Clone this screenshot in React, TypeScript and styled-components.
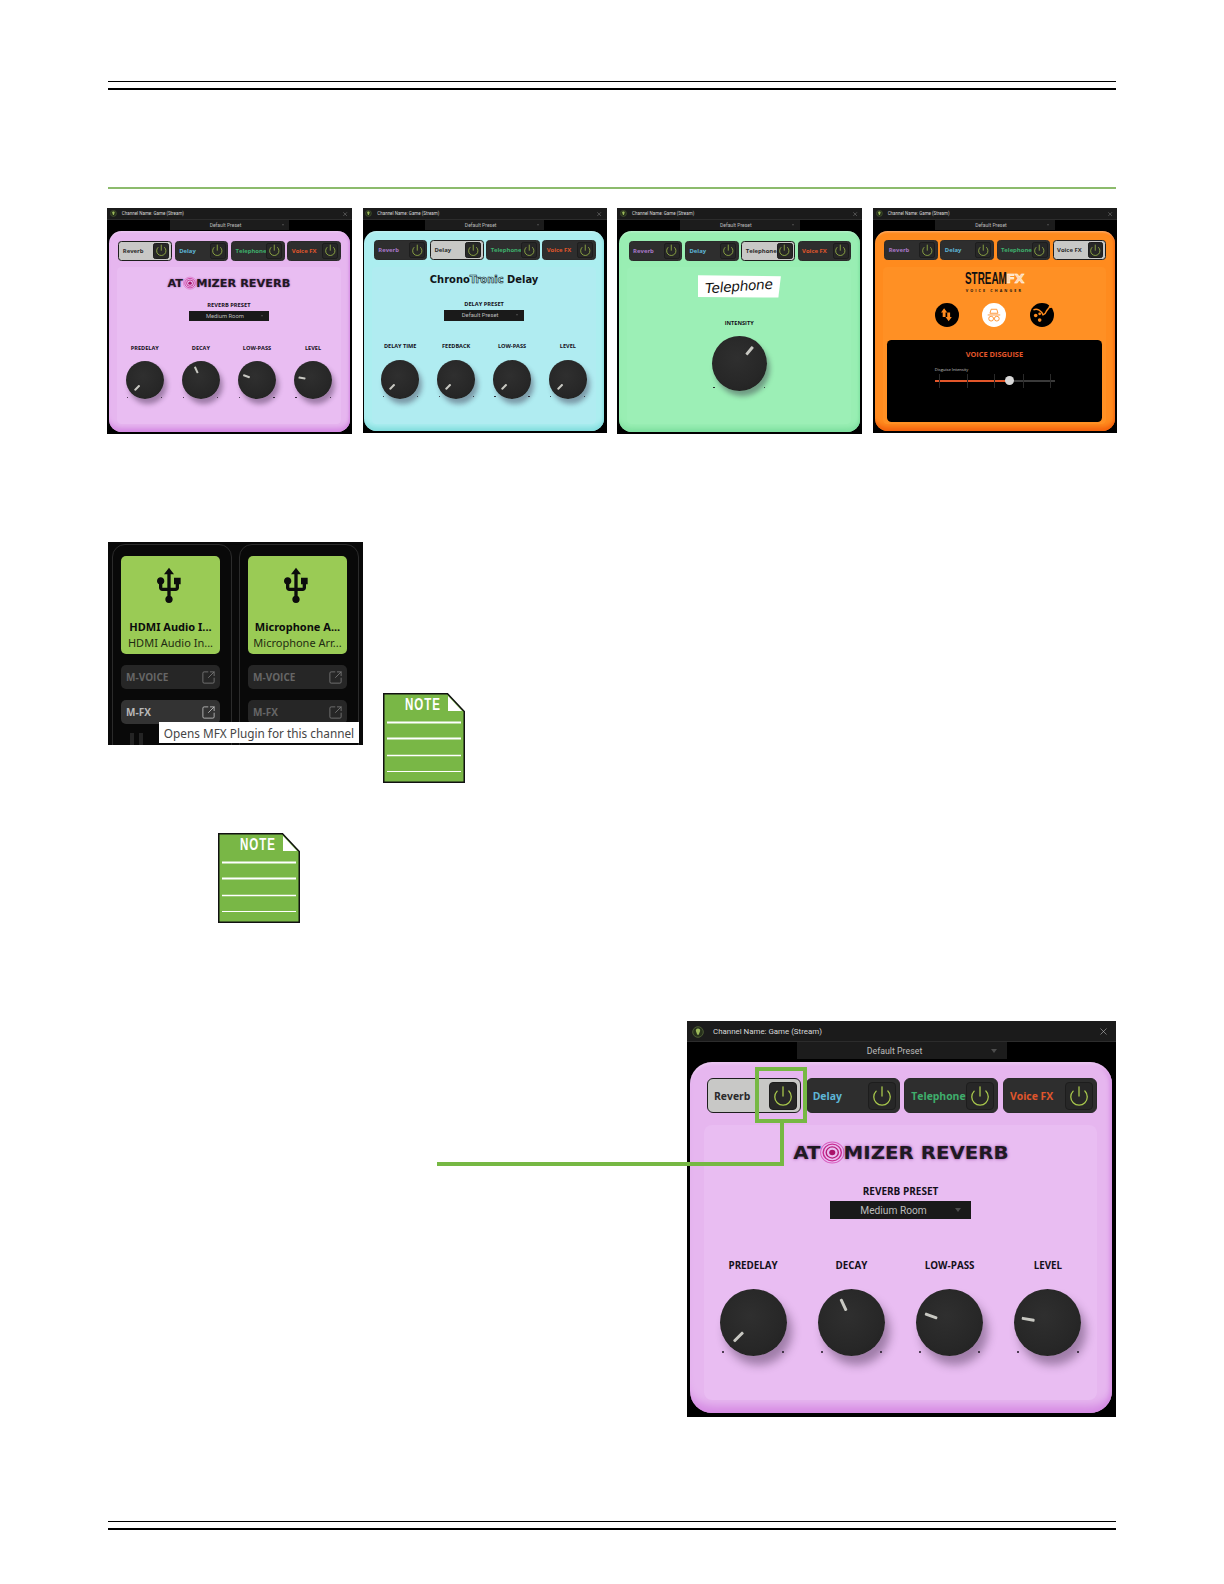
import React from "react";
import styled, { createGlobalStyle } from "styled-components";
import { Power, X, SquareArrowOutUpRight } from "lucide-react";
import { MdUsb } from "react-icons/md";

const Global = createGlobalStyle`
  html, body { margin: 0; padding: 0; background: #fff; }
  body { font-family: "Open Sans", "Liberation Sans", sans-serif; }
`;

const Page = styled.div`
  width: 1224px;
  height: 1584px;
  box-sizing: border-box;
  padding: 81px 108px 0;
  display: flex;
  flex-direction: column;
  overflow: hidden;
`;
const ThinRule = styled.div<{ $top?: number }>`
  height: 1px;
  background: #000;
  margin-top: ${p => p.$top ?? 0}px;
`;
const ThickRule = styled.div`
  height: 2px;
  background: #000;
  margin-top: 6px;
`;
const GreenRule = styled.div`
  height: 2px;
  background: #8cbb6c;
  margin-top: 97px;
`;
const PanelRow = styled.div`
  display: flex;
  justify-content: space-between;
  align-items: flex-start;
  margin: 19px -1px 0;
  width: 1010px;
  height: 226px;
`;

const Frame = styled.div<{ $scale: number }>`
  zoom: ${p => p.$scale};
  width: 429px;
  height: 396px;
  background: #000;
  display: flex;
  flex-direction: column;
  flex: none;
`;
const TitleBar = styled.div`
  height: 21px;
  box-sizing: border-box;
  background: #1b1b1b;
  display: flex;
  align-items: center;
  padding: 1px 7px 0 5px;
  gap: 9px;
  color: #d8d8d8;
  font-size: 7.9px;
  font-family: "Roboto", sans-serif;
  border-bottom: 1px solid #2c2c2c;
`;
const TitleText = styled.span`
  flex: 1;
`;
const PresetBar = styled.div`
  height: 17px;
  display: flex;
  justify-content: center;
`;
const PresetTop = styled.div`
  width: 210px;
  background: #1c1c1c;
  color: #bdbdbd;
  font-size: 8.8px;
  font-family: "Roboto", sans-serif;
  display: flex;
  align-items: center;
  justify-content: center;
  padding-right: 14px;
  box-sizing: border-box;
  position: relative;
`;
const PresetChevron = styled.span`
  position: absolute;
  right: 10px;
  top: 50%;
  transform: translateY(-50%);
  width: 0;
  height: 0;
  border-left: 3.5px solid transparent;
  border-right: 3.5px solid transparent;
  border-top: 4px solid #4d4d4d;
`;
const Body = styled.div<{ $bg: string; $edge: string }>`
  margin: 3px 4px 4px 3px;
  flex: 1;
  border-radius: 22px;
  background: ${p => p.$bg};
  box-shadow: inset 0 -13px 10px -6px ${p => p.$edge}, inset 0 3px 3px -1px rgba(255, 255, 255, 0.35), inset -3px 0 4px -1px ${p => p.$edge};
  padding: 16px 15px 13px 14px;
  display: flex;
  flex-direction: column;
  gap: 12px;
  box-sizing: border-box;
`;
const Tabs = styled.div`
  display: grid;
  grid-template-columns: repeat(4, 94px);
  gap: 4.67px;
  margin-left: 3px;
`;
const Tab = styled.div<{ $active: boolean }>`
  height: 35px;
  box-sizing: border-box;
  border-radius: 6px;
  background: ${p => (p.$active ? "#c8c8c6" : "#2e2e2e")};
  border: ${p => (p.$active ? "1.5px solid #1d1d1d" : "1px solid #2a2a2a")};
  display: flex;
  align-items: center;
  justify-content: space-between;
  padding: 0 3px 0 6px;
`;
const TabLabel = styled.span<{ $color: string }>`
  color: ${p => p.$color};
  font-weight: 700;
  font-size: 10.4px;
  white-space: nowrap;
`;
const PowerBox = styled.span`
  width: 28px;
  height: 28px;
  flex: none;
  border-radius: 4px;
  background: #272727;
  border: 1px solid #1d1d1d;
  box-sizing: border-box;
  display: flex;
  align-items: center;
  justify-content: center;
  color: #a8c84c;
`;
const Inner = styled.div<{ $bg: string }>`
  flex: 1;
  border-radius: 8px;
  background: ${p => p.$bg};
  display: flex;
  flex-direction: column;
  align-items: center;
  min-height: 0;
`;
const LogoSlot = styled.div`
  height: 55px;
  display: flex;
  align-items: center;
  justify-content: center;
`;
const AtomizerLogo = styled.div`
  font-family: "DejaVu Sans", sans-serif;
  font-weight: 700;
  font-size: 18px;
  color: #1f1a22;
  display: flex;
  align-items: center;
  white-space: nowrap;
  text-shadow: 0 0 3px #8a3f9c;
  transform: scaleX(1.1);
`;
const ChronoLogo = styled.div`
  font-family: "DejaVu Sans", sans-serif;
  font-weight: 700;
  font-size: 17.5px;
  color: #10151a;
  white-space: nowrap;
  margin-top: -10px;
`;
const Outlined = styled.span`
  color: transparent;
  -webkit-text-stroke: 1px #10151a;
`;
const PresetLabel = styled.div`
  font-family: "Open Sans", sans-serif;
  font-weight: 700;
  font-size: 10px;
  color: #14101a;
  line-height: 14px;
  margin-top: 4px;
`;
const PresetSelect = styled.div`
  width: 141px;
  height: 18px;
  margin-top: 3px;
  background: #1a1a1a;
  color: #bcbcbc;
  font-size: 10.2px;
  font-family: "Roboto", sans-serif;
  display: flex;
  align-items: center;
  justify-content: center;
  padding-right: 14px;
  box-sizing: border-box;
  position: relative;
`;
const KnobGrid = styled.div`
  width: 100%;
  display: grid;
  grid-template-columns: repeat(4, 1fr);
  margin-top: 40px;
`;
const KnobCol = styled.div`
  display: flex;
  flex-direction: column;
  align-items: center;
`;
const KnobLabel = styled.div`
  font-weight: 700;
  font-size: 9.8px;
  line-height: 14px;
  color: #14101a;
  margin-bottom: 16px;
  white-space: nowrap;
`;
const KnobDial = styled.div<{ $size: number }>`
  width: ${p => p.$size}px;
  height: ${p => p.$size}px;
  border-radius: 50%;
  background: radial-gradient(circle at 45% 40%, #2f2f2f 0%, #272727 60%, #1f1f1f 100%);
  box-shadow: 5px 9px 10px rgba(40, 20, 50, 0.38);
  position: relative;
`;
const KnobPointer = styled.span<{ $angle: number; $size: number }>`
  position: absolute;
  left: 50%;
  top: 50%;
  width: ${p => p.$size * 0.052}px;
  height: ${p => p.$size * 0.19}px;
  margin-left: ${p => p.$size * -0.026}px;
  border-radius: 1px;
  background: #c8c8c2;
  transform-origin: 50% 0;
  transform: rotate(${p => p.$angle + 180}deg) translateY(${p => p.$size * 0.2}px);
`;
const KnobDot = styled.span<{ $side: "left" | "right"; $size: number }>`
  position: absolute;
  top: ${p => p.$size * 0.93}px;
  ${p => p.$side}: ${p => p.$size * 0.01}px;
  width: 2px;
  height: 2px;
  border-radius: 50%;
  background: #1c1420;
  ${p => (p.$side === "left" ? "margin-left: 2px;" : "margin-right: 2px;")}
`;

function Knob({ angle, size = 67 }: { angle: number; size?: number }) {
  return (
    <KnobDial $size={size}>
      <KnobPointer $angle={angle} $size={size} />
      <KnobDot $side="left" $size={size} />
      <KnobDot $side="right" $size={size} />
    </KnobDial>
  );
}

const TAB_DEFS = [
  { name: "Reverb", color: "#a878c8" },
  { name: "Delay", color: "#5eb6d6" },
  { name: "Telephone", color: "#3fae6c" },
  { name: "Voice FX", color: "#e0562c" },
];

function HeaderLogo() {
  return (
    <svg width="12" height="12" viewBox="0 0 12 12">
      <circle cx="6" cy="6" r="5.3" fill="#26301c" stroke="#4d5c34" strokeWidth="1" />
      <path d="M6 2.5c1.6 0 2.4 1.2 2.1 2.4L6.7 8.8H5.3L3.9 4.9C3.6 3.7 4.4 2.5 6 2.5z" fill="#9cb95a" />
    </svg>
  );
}

function Shell({ scale, active, bg, inner, edge, children }: { scale: number; active: string; bg: string; inner: string; edge: string; children: React.ReactNode }) {
  return (
    <Frame $scale={scale}>
      <TitleBar>
        <HeaderLogo />
        <TitleText>Channel Name: Game (Stream)</TitleText>
        <X size={11} strokeWidth={1.2} color="#c4c4c4" />
      </TitleBar>
      <PresetBar>
        <PresetTop>
          Default Preset
          <PresetChevron />
        </PresetTop>
      </PresetBar>
      <Body $bg={bg} $edge={edge}>
        <Tabs>
          {TAB_DEFS.map(t => (
            <Tab key={t.name} $active={t.name === active}>
              <TabLabel $color={t.name === active ? "#2a2a2a" : t.color}>{t.name}</TabLabel>
              <PowerBox>
                <Power size={22} strokeWidth={1.4} />
              </PowerBox>
            </Tab>
          ))}
        </Tabs>
        <Inner $bg={inner}>{children}</Inner>
      </Body>
    </Frame>
  );
}

function KnobSet({ items }: { items: [string, number][] }) {
  return (
    <KnobGrid>
      {items.map(([label, angle]) => (
        <KnobCol key={label}>
          <KnobLabel>{label}</KnobLabel>
          <Knob angle={angle} />
        </KnobCol>
      ))}
    </KnobGrid>
  );
}

function Target() {
  return (
    <svg width="23" height="25" viewBox="0 0 25 25" style={{ margin: "0 -1px" }}>
      <circle cx="12.5" cy="12.5" r="11.5" fill="none" stroke="#d860c0" strokeWidth="1" />
      <circle cx="12.5" cy="12.5" r="9" fill="none" stroke="#c82a90" strokeWidth="1.4" />
      <circle cx="12.5" cy="12.5" r="6" fill="none" stroke="#b81c78" strokeWidth="1.4" />
      <circle cx="12.5" cy="12.5" r="3" fill="#a8126a" />
    </svg>
  );
}

function ReverbPanel({ scale }: { scale: number }) {
  return (
    <Shell scale={scale} active="Reverb" bg="#e6b6ef" inner="#e9bdf2" edge="#d58be3">
      <LogoSlot>
        <AtomizerLogo>
          AT<Target />MIZER REVERB
        </AtomizerLogo>
      </LogoSlot>
      <PresetLabel>REVERB PRESET</PresetLabel>
      <PresetSelect>
        Medium Room
        <PresetChevron />
      </PresetSelect>
      <KnobSet items={[["PREDELAY", -135], ["DECAY", -25], ["LOW-PASS", -70], ["LEVEL", -80]]} />
    </Shell>
  );
}

function DelayPanel({ scale }: { scale: number }) {
  return (
    <Shell scale={scale} active="Delay" bg="#aceef0" inner="#b0ecf1" edge="#84dede">
      <LogoSlot>
        <ChronoLogo>
          Chrono<Outlined>Tronic</Outlined> Delay
        </ChronoLogo>
      </LogoSlot>
      <PresetLabel>DELAY PRESET</PresetLabel>
      <PresetSelect>
        Default Preset
        <PresetChevron />
      </PresetSelect>
      <KnobSet items={[["DELAY TIME", -135], ["FEEDBACK", -135], ["LOW-PASS", -135], ["LEVEL", -135]]} />
    </Shell>
  );
}

const TelePatch = styled.div`
  margin-top: 14px;
  width: 146px;
  height: 39px;
  background: #fff;
  clip-path: polygon(0 0, 100% 4%, 97% 100%, 0 97%);
  display: flex;
  align-items: center;
  justify-content: center;
`;
const TeleText = styled.span`
  font-family: "DejaVu Sans", sans-serif;
  font-style: oblique;
  font-size: 24px;
  color: #111;
  letter-spacing: -0.5px;
  transform: rotate(-4deg);
`;
const TeleLabel = styled(KnobLabel)`
  margin-top: 37px;
  margin-bottom: 16px;
`;

function TelephonePanel({ scale }: { scale: number }) {
  return (
    <Shell scale={scale} active="Telephone" bg="#99eeb3" inner="#9cefb6" edge="#7fe0a0">
      <TelePatch>
        <TeleText>Telephone</TeleText>
      </TelePatch>
      <TeleLabel>INTENSITY</TeleLabel>
      <Knob angle={40} size={96} />
    </Shell>
  );
}

const FxLogo = styled.div`
  margin-top: 7px;
  display: flex;
  flex-direction: column;
  align-items: center;
`;
const FxTitle = styled.div`
  display: flex;
  align-items: center;
  height: 28px;
`;
const StreamWord = styled.span`
  width: 73px;
  font-family: "Liberation Sans", sans-serif;
  font-weight: 700;
  font-size: 29px;
  line-height: 28px;
  color: #111;
  white-space: nowrap;
  transform-origin: 0 50%;
  transform: scaleX(0.6);
`;
const FxOutlined = styled.span`
  color: #ffd8ae;
  -webkit-text-stroke: 0.7px #fff;
  font-family: "DejaVu Sans", sans-serif;
  font-weight: 700;
  font-size: 23px;
  line-height: 28px;
  letter-spacing: -1px;
`;
const FxSub = styled.div`
  font-size: 6.5px;
  font-weight: 700;
  letter-spacing: 3.7px;
  line-height: 9px;
  color: #111;
  margin-top: 1px;
`;
const FxModes = styled.div`
  display: flex;
  gap: 42px;
  margin-top: 18px;
`;
const FxCircle = styled.div<{ $light?: boolean }>`
  width: 42px;
  height: 42px;
  border-radius: 50%;
  background: ${p => (p.$light ? "#fff" : "#000")};
  display: flex;
  align-items: center;
  justify-content: center;
`;
const FxBox = styled.div`
  align-self: stretch;
  margin: 23px 8px 3px;
  flex: 1;
  background: #000;
  border-radius: 8px;
  position: relative;
  display: flex;
  flex-direction: column;
  align-items: center;
`;
const FxBoxTitle = styled.div`
  margin-top: 18px;
  font-size: 13px;
  line-height: 16px;
  font-weight: 700;
  color: #e2562a;
`;
const SliderLabel = styled.div`
  align-self: flex-start;
  margin: 13px 0 0 84px;
  font-size: 7.2px;
  line-height: 10px;
  color: #c8c8c8;
`;
const SliderTrack = styled.div`
  align-self: flex-start;
  margin: 14px 0 0 84px;
  width: 212px;
  height: 3px;
  background: #3a3a3a;
  position: relative;
`;
const SliderFill = styled.div`
  height: 100%;
  background: #e2562a;
`;
const SliderTick = styled.span`
  position: absolute;
  top: -11px;
  width: 1px;
  height: 24px;
  background: #2a2a2a;
`;
const SliderThumb = styled.span`
  position: absolute;
  top: -7px;
  width: 16px;
  height: 16px;
  margin-left: -8px;
  border-radius: 50%;
  background: #d8d8d8;
`;

function FxPanel({ scale }: { scale: number }) {
  const ticks = [7, 57, 104, 155, 202];
  return (
    <Shell scale={scale} active="Voice FX" bg="#ff8b1e" inner="#ff9024" edge="#f4620e">
      <FxLogo>
        <FxTitle>
          <StreamWord>STREAM</StreamWord>
          <FxOutlined>FX</FxOutlined>
        </FxTitle>
        <FxSub>VOICE CHANGER</FxSub>
      </FxLogo>
      <FxModes>
        <FxCircle>
          <svg width="26" height="30" viewBox="0 0 26 30" fill="#ff8b1e">
            <path d="M9 4l5.500 7.500H11.500v8h-5v-8H3.500z" />
            <path d="M17 27l-5.500-7.500H14.500v-8h5v8h3z" />
          </svg>
        </FxCircle>
        <FxCircle $light>
          <svg width="28" height="28" viewBox="0 0 28 28" fill="none" stroke="#ff8b1e" strokeWidth="1.5">
            <path d="M9 4h10l2 7H7z" />
            <path d="M3 14h22" />
            <circle cx="9" cy="20.500" r="4.200" />
            <circle cx="19" cy="20.500" r="4.200" />
            <path d="M13 20h2" />
          </svg>
        </FxCircle>
        <FxCircle>
          <svg width="42" height="42" viewBox="0 0 42 42" fill="none">
            <path d="M6 12c7-3 14 1 17 9 3-1 5-4 6-7l7-9" stroke="#ff8b1e" strokeWidth="2.500" />
            <circle cx="36" cy="6" r="3" fill="#ff8b1e" />
            <circle cx="10" cy="22" r="3.200" fill="#ff8b1e" />
            <circle cx="17" cy="30" r="3.200" fill="#ff8b1e" />
            <circle cx="17" cy="19" r="2.400" fill="#ff8b1e" />
          </svg>
        </FxCircle>
      </FxModes>
      <FxBox>
        <FxBoxTitle>VOICE DISGUISE</FxBoxTitle>
        <SliderLabel>Disguise Intensity</SliderLabel>
        <SliderTrack>
          <SliderFill style={{ width: "62%" }} />
          {ticks.map(t => (
            <SliderTick key={t} style={{ left: t }} />
          ))}
          <SliderThumb style={{ left: "62%" }} />
        </SliderTrack>
      </FxBox>
    </Shell>
  );
}

const StripRow = styled.div`
  display: flex;
  align-items: flex-start;
  margin-top: 108px;
`;
const StripPanel = styled.div`
  width: 255px;
  height: 203px;
  background: #090909;
  position: relative;
  overflow: hidden;
  display: flex;
  gap: 7px;
  padding: 2px 0 0 4px;
  box-sizing: border-box;
  flex: none;
`;
const Strip = styled.div`
  width: 120px;
  height: 240px;
  flex: none;
  box-sizing: border-box;
  border: 1px solid #2b2b2b;
  border-radius: 13px;
  padding: 11px 11px 0 8px;
  display: flex;
  flex-direction: column;
  gap: 11px;
`;
const UsbCard = styled.div`
  height: 98px;
  border-radius: 5px;
  background: #9acb55;
  display: flex;
  flex-direction: column;
  align-items: center;
  color: #0c0c0c;
  font-family: "Noto Sans", sans-serif;
  font-size: 11px;
  line-height: 15.5px;
  padding-top: 10px;
  box-sizing: border-box;
`;
const UsbGlyph = styled.div`
  height: 40px;
  margin-left: -3px;
`;
const UsbName = styled.div`
  font-weight: 700;
  margin-top: 13px;
  white-space: nowrap;
`;
const UsbSub = styled.div`
  white-space: nowrap;
  color: #1f2b12;
`;
const StripButton = styled.div<{ $lit?: boolean }>`
  height: 24px;
  border-radius: 5px;
  background: ${p => (p.$lit ? "#333" : "#262626")};
  color: ${p => (p.$lit ? "#b8b8b8" : "#666")};
  font-size: 10px;
  font-weight: 700;
  display: flex;
  align-items: center;
  justify-content: space-between;
  padding: 0 4px 0 5px;
`;
const Tooltip = styled.div`
  position: absolute;
  left: 51px;
  top: 180px;
  width: 200px;
  height: 21px;
  background: #fff;
  color: #454545;
  font-family: "Noto Sans", sans-serif;
  font-size: 11.8px;
  display: flex;
  align-items: center;
  justify-content: center;
  white-space: nowrap;
`;
const Meter = styled.div`
  position: absolute;
  left: 22px;
  top: 191px;
  display: flex;
  gap: 5px;
`;
const MeterBar = styled.span`
  width: 4px;
  height: 12px;
  background: #242424;
`;

function ChannelStrip({ name, sub, lit }: { name: string; sub: string; lit?: boolean }) {
  return (
    <Strip>
      <UsbCard>
        <UsbGlyph>
          <MdUsb size={40} />
        </UsbGlyph>
        <UsbName>{name}</UsbName>
        <UsbSub>{sub}</UsbSub>
      </UsbCard>
      <StripButton>
        M-VOICE
        <SquareArrowOutUpRight size={15} strokeWidth={1.4} color="#777" />
      </StripButton>
      <StripButton $lit={lit}>
        M-FX
        <SquareArrowOutUpRight size={15} strokeWidth={1.4} color={lit ? "#bbb" : "#777"} />
      </StripButton>
    </Strip>
  );
}

const NoteCard = styled.div<{ $left: number; $top: number }>`
  width: 82px;
  height: 90px;
  position: relative;
  flex: none;
  margin: ${p => p.$top}px 0 0 ${p => p.$left}px;
  display: flex;
  justify-content: flex-start;
`;
const NoteArt = styled.svg`
  position: absolute;
  inset: 0;
`;
const NoteWord = styled.div`
  position: relative;
  margin: 2px 0 0 22px;
  font-family: "Liberation Sans", sans-serif;
  font-weight: 700;
  font-size: 17px;
  line-height: 20px;
  letter-spacing: 1.4px;
  color: #fff;
  white-space: nowrap;
  transform-origin: 0 50%;
  transform: scaleX(0.68);
`;

function Note({ left, top }: { left: number; top: number }) {
  return (
    <NoteCard $left={left} $top={top}>
      <NoteArt width="82" height="90" viewBox="0 0 82 90">
        <path d="M.75.75H64.500L81.250 18.500V89.250H.75z" fill="#79b746" stroke="#111" strokeWidth="1.500" />
        <path d="M65 3L79 18H65z" fill="#fff" />
        <path d="M4 29.500H78" stroke="#fff" strokeWidth="1.800" />
        <path d="M4 45.500H78" stroke="#fff" strokeWidth="1.800" />
        <path d="M4 62.500H78" stroke="#fff" strokeWidth="1.500" />
        <path d="M4 78.500H78" stroke="#fff" strokeWidth="1.200" />
      </NoteArt>
      <NoteWord>NOTE</NoteWord>
    </NoteCard>
  );
}

const BigWrap = styled.div`
  align-self: flex-end;
  width: 429px;
  margin-top: 98px;
  position: relative;
`;
const CalloutBox = styled.div`
  position: absolute;
  left: 68px;
  top: 46px;
  width: 52px;
  height: 56px;
  box-sizing: border-box;
  border: 4px solid #76b843;
`;
const CalloutLine = styled.div`
  position: absolute;
  left: -250px;
  top: 101px;
  width: 347px;
  height: 44px;
  box-sizing: border-box;
  border-right: 4px solid #76b843;
  border-bottom: 4px solid #76b843;
`;

export default function App() {
  return (
    <Page>
      <Global />
      <ThinRule />
      <ThickRule />
      <GreenRule />
      <PanelRow>
        <ReverbPanel scale={0.571} />
        <DelayPanel scale={0.569} />
        <TelephonePanel scale={0.571} />
        <FxPanel scale={0.569} />
      </PanelRow>
      <StripRow>
        <StripPanel>
          <ChannelStrip name="HDMI Audio I..." sub="HDMI Audio In..." lit />
          <ChannelStrip name="Microphone A..." sub="Microphone Arr..." />
          <Meter>
            <MeterBar />
            <MeterBar />
          </Meter>
          <Tooltip>Opens MFX Plugin for this channel</Tooltip>
        </StripPanel>
        <Note left={20} top={151} />
      </StripRow>
      <Note left={110} top={50} />
      <BigWrap>
        <ReverbPanel scale={1} />
        <CalloutLine />
        <CalloutBox />
      </BigWrap>
      <ThinRule $top={104} />
      <ThickRule />
    </Page>
  );
}
